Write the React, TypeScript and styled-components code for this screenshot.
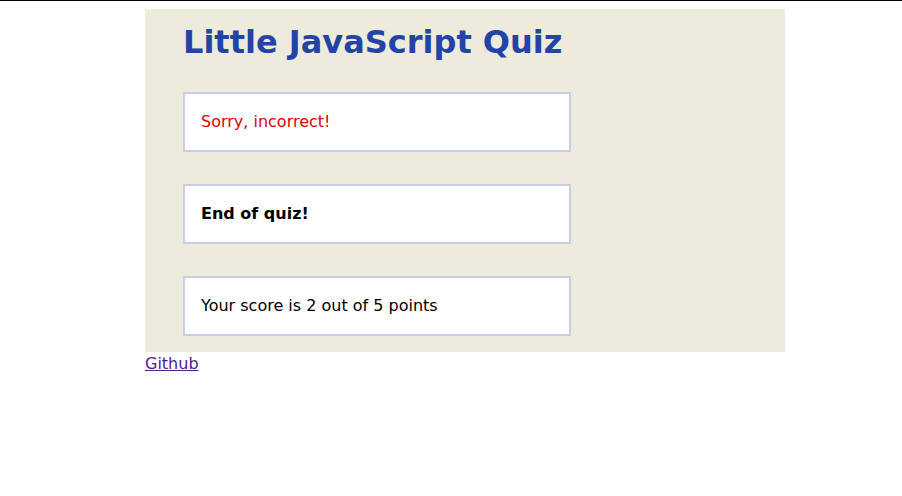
import styled, { createGlobalStyle } from "styled-components";

const GlobalStyle = createGlobalStyle`
  html {
    border-top: 1px solid #000;
  }

  body {
    margin: 8px;
    font-family: "DejaVu Sans", sans-serif;
    background: #fff;
  }
`;

const Page = styled.div`
  width: 640px;
  margin-left: 137px;
`;

const Panel = styled.main`
  background: #ecebdc;
  padding: 15px 38px 16px;
`;

const Title = styled.h1`
  margin: 0 0 31px;
  font-size: 32px;
  line-height: 37px;
  font-weight: bold;
  color: #2343a6;
`;

const Card = styled.div<{ $tone?: "error" | "plain" }>`
  width: 352px;
  background: #fff;
  border: 2px solid #cbcde8;
  padding: 18px 16px;
  line-height: 20px;
  font-size: 16px;
  color: ${(p) => (p.$tone === "error" ? "#e00000" : "#000")};

  & + & {
    margin-top: 32px;
  }
`;

const Strong = styled.strong`
  font-weight: bold;
`;

const Footer = styled.footer`
  padding-top: 2px;
  font-size: 16px;
`;

const RepoLink = styled.a`
  color: #551a8b;
`;

export default function App() {
  return (
    <Page>
      <GlobalStyle />
      <Panel>
        <Title>Little JavaScript Quiz</Title>
        <Card $tone="error">Sorry, incorrect!</Card>
        <Card>
          <Strong>End of quiz!</Strong>
        </Card>
        <Card>Your score is 2 out of 5 points</Card>
      </Panel>
      <Footer>
        <RepoLink href="#">Github</RepoLink>
      </Footer>
    </Page>
  );
}
